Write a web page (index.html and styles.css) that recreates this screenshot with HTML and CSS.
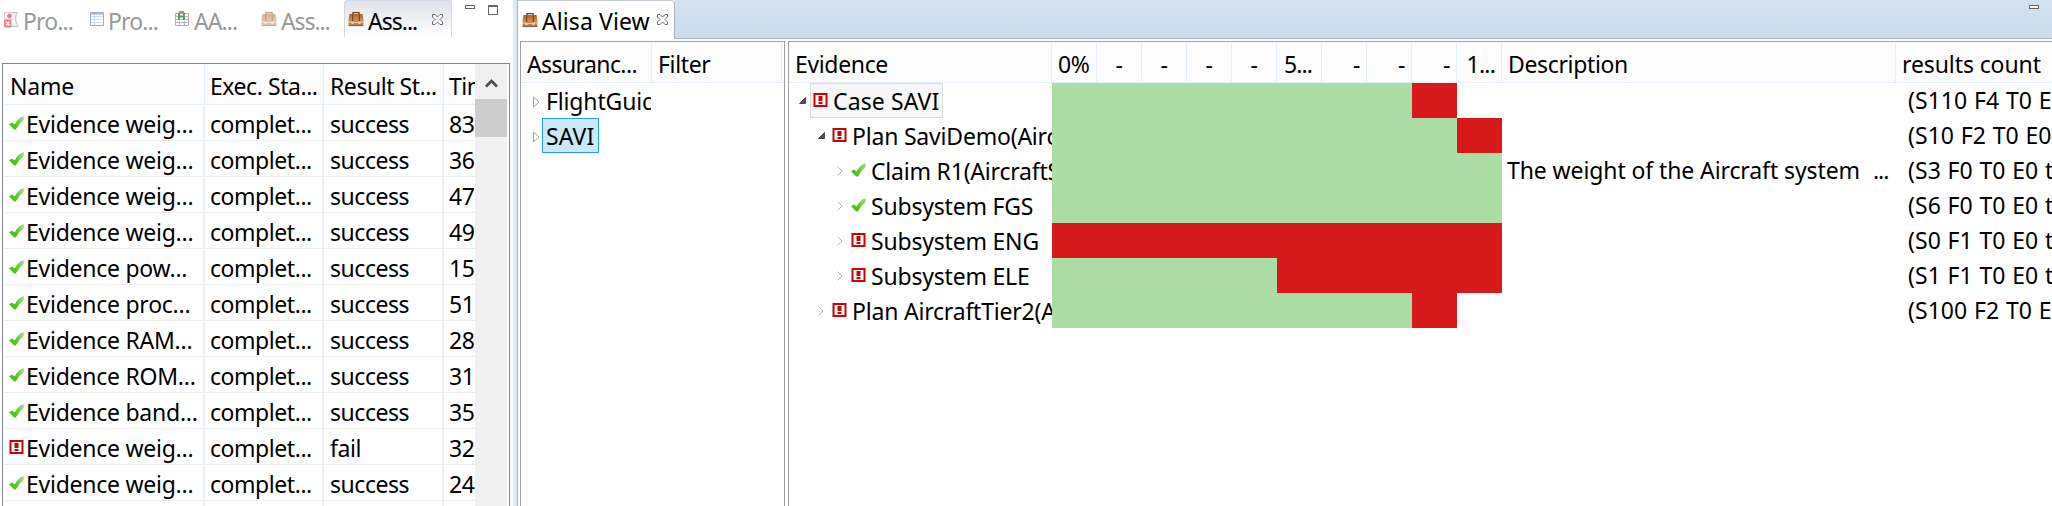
FILE: index.html
```html
<!DOCTYPE html>
<html lang="en">
<head>
<meta charset="utf-8">
<title>Alisa View</title>
<link rel="stylesheet" href="styles.css">
</head>
<body>
<svg class="defs" width="0" height="0">
  <defs>
    <linearGradient id="gCheck" x1="0" y1="1" x2="1" y2="0"><stop offset="0.35" stop-color="#4fc414"/><stop offset="1" stop-color="#b0de94"/></linearGradient>
    <linearGradient id="gCase" x1="0" y1="0" x2="0" y2="1"><stop offset="0" stop-color="#a8642f"/><stop offset="0.5" stop-color="#d08a4c"/><stop offset="1" stop-color="#b87a48"/></linearGradient>
  </defs>
  <symbol id="check" viewBox="0 0 15 14"><path d="M0 8.300 L3 6.400 L5.600 8.600 Q8.500 3 12 1 L15 0.200 L14.600 4 Q10.500 7 6.800 13.400 H5.200 Z" fill="url(#gCheck)"/></symbol>
  <symbol id="fail" viewBox="0 0 14 14"><path d="M1 1H13V13H1Z" fill="#fff" stroke="#c80404" stroke-width="2"/><path d="M5 3H9V8H5ZM5 9H9V11H5Z" fill="#c80404"/></symbol>
  <symbol id="case" viewBox="0 0 16 16"><path d="M5 4V1.600H11V4" fill="none" stroke="#70401c" stroke-width="1.400"/><path d="M1.500 3H14.500L15.400 8V14.600H0.600V8Z" fill="url(#gCase)"/><path d="M0.600 14.600H15.400" stroke="#7c5a3e" stroke-width="1"/><path d="M4.600 3.400V11M11.400 3.400V11" stroke="#7c451c" stroke-width="1.200"/><path d="M1 11H5M6 11.400H10M11 11H15" stroke="#e8d4bc" stroke-width="1"/><path d="M3.400 10.500H5.800V13H3.400ZM10.200 10.500H12.600V13H10.200Z" fill="#d9d3c8"/></symbol>
  <symbol id="close" viewBox="0 0 11 11"><path d="M0.500 0.500H3L5.500 3L8 0.500H10.500V3L8 5.500L10.500 8V10.500H8L5.500 8L3 10.500H0.500V8L3 5.500L0.500 3Z" fill="#fff" stroke="#6b6b6b"/></symbol>
  <symbol id="closed" viewBox="0 0 7 12"><path d="M0.500 1L6 6L0.500 11Z" fill="#fff" stroke="#a0a0a0"/></symbol>
  <symbol id="chev" viewBox="0 0 6 10"><path d="M0.600 0.600L5 5L0.600 9.400" fill="none" stroke="#b4b4b4"/></symbol>
  <symbol id="open" viewBox="0 0 7 7"><path d="M6.500 0.500V6.500H0.500Z" fill="#505050" stroke="#303030" stroke-width="0.800"/></symbol>
</svg>
<div class="app">
  <section class="left">
    <div class="tabs">
      <div class="tab t1"><svg width="15" height="17" viewBox="0 0 15 17"><path d="M0.500 1.500H9V8H0.500Z" fill="#fff" stroke="#dcc8d0"/><circle cx="5.500" cy="5" r="2.400" fill="#f08088"/><path d="M9 1.500H13.500L11.800 5V10L14 15.500H8" fill="#eef4fa" stroke="#b4c4d4"/><path d="M0 8.500H7.500V16.500H0Z" fill="#f08088"/><path d="M2 10.500L5.500 14.500M5.500 10.500L2 14.500" stroke="#fff" stroke-width="1.300"/></svg><span>Pro...</span></div>
      <div class="tab t2"><svg width="14" height="14" viewBox="0 0 14 14"><path d="M0.500 0.500H13.500V13.500H0.500Z" fill="#fafcff" stroke="#a4acc0"/><path d="M0.500 1.500H13.500" stroke="#a4b4d0" stroke-width="2"/><path d="M1 4.500H13M1 7.500H13M1 10.500H13M4.500 3V13" stroke="#d0dcec"/></svg><span>Pro...</span></div>
      <div class="tab t3"><svg width="14" height="16" viewBox="0 0 14 16"><path d="M0.500 2.500H13.500V14.500H0.500Z" fill="#fff" stroke="#a8b0b8"/><path d="M1 5.500H13M1 8.500H13M1 11.500H13M4.500 10V14M9.500 10V14" stroke="#b4bcc4"/><path d="M4 9V3L5 1H8L9 3V9M4 5.500H9" fill="none" stroke="#5f9c68" stroke-width="2"/><path d="M4.500 1.500H8.500" fill="none" stroke="#e07880" stroke-width="2"/></svg><span>AA...</span></div>
      <div class="tab t4"><svg class="dim" width="16" height="16"><use href="#case"/></svg><span>Ass...</span></div>
      <div class="tab active"><svg width="16" height="16"><use href="#case"/></svg><span>Ass...</span><svg class="x" width="11" height="11"><use href="#close"/></svg></div>
      <i class="min"></i><i class="max"></i>
    </div>
    <div class="results">
      <div class="grid">
        <div class="r head"><div>Name</div><div>Exec. Sta...</div><div>Result St...</div><div>Tim</div></div>
        <div class="r"><div><svg><use href="#check"/></svg><span>Evidence weig...</span></div><div>complet...</div><div>success</div><div>83</div></div>
        <div class="r"><div><svg><use href="#check"/></svg><span>Evidence weig...</span></div><div>complet...</div><div>success</div><div>36</div></div>
        <div class="r"><div><svg><use href="#check"/></svg><span>Evidence weig...</span></div><div>complet...</div><div>success</div><div>47</div></div>
        <div class="r"><div><svg><use href="#check"/></svg><span>Evidence weig...</span></div><div>complet...</div><div>success</div><div>49</div></div>
        <div class="r"><div><svg><use href="#check"/></svg><span>Evidence pow...</span></div><div>complet...</div><div>success</div><div>15</div></div>
        <div class="r"><div><svg><use href="#check"/></svg><span>Evidence proc...</span></div><div>complet...</div><div>success</div><div>51</div></div>
        <div class="r"><div><svg><use href="#check"/></svg><span>Evidence RAM...</span></div><div>complet...</div><div>success</div><div>28</div></div>
        <div class="r"><div><svg><use href="#check"/></svg><span>Evidence ROM...</span></div><div>complet...</div><div>success</div><div>31</div></div>
        <div class="r"><div><svg><use href="#check"/></svg><span>Evidence band...</span></div><div>complet...</div><div>success</div><div>35</div></div>
        <div class="r"><div><svg><use href="#fail"/></svg><span>Evidence weig...</span></div><div>complet...</div><div>fail</div><div>32</div></div>
        <div class="r"><div><svg><use href="#check"/></svg><span>Evidence weig...</span></div><div>complet...</div><div>success</div><div>24</div></div>
        <div class="r"><div></div><div></div><div></div><div></div></div>
      </div>
      <div class="scroll"><div class="up"><svg width="13" height="10" viewBox="0 0 13 10"><path d="M1 8.500L6.500 3L12 8.500" fill="none" stroke="#505050" stroke-width="2.800"/></svg></div><div class="thumb"></div></div>
    </div>
  </section>
  <div class="sash"></div>
  <section class="right">
    <div class="bar">
      <div class="vtab"><svg width="16" height="16"><use href="#case"/></svg><span>Alisa View</span><svg class="x" width="11" height="11"><use href="#close"/></svg></div>
      <div class="fill"><i class="min"></i></div>
    </div>
    <div class="views">
      <div class="pane cases">
        <div class="phead"><div class="c1">Assuranc...</div><div class="c2">Filter</div></div>
        <div class="crow"><svg width="7" height="12"><use href="#closed"/></svg><span>FlightGuidance</span></div>
        <div class="crow"><svg width="7" height="12"><use href="#closed"/></svg><span class="sel">SAVI</span></div>
      </div>
      <div class="pane evidence">
        <div class="phead"><div class="ev">Evidence</div><div class="p">0%</div><div class="p mid">-</div><div class="p mid">-</div><div class="p mid">-</div><div class="p mid">-</div><div class="p five">5...</div><div class="p end">-</div><div class="p end">-</div><div class="p end">-</div><div class="p end one">1...</div><div class="desc">Description</div><div class="cnt">results count</div></div>
        <div class="erow"><div class="name"><svg class="o" width="7" height="7"><use href="#open"/></svg><span class="item focus"><svg class="ic"><use href="#fail"/></svg>Case SAVI</span></div><div class="g s8"></div><div class="b s1"></div><div class="w s1"></div><div class="desc"></div><div class="cnt">(S110 F4 T0 E0</div></div>
        <div class="erow l1"><div class="name"><svg class="o" width="7" height="7"><use href="#open"/></svg><span class="item"><svg class="ic"><use href="#fail"/></svg>Plan SaviDemo(Aircraft</span></div><div class="g s9"></div><div class="b s1"></div><div class="desc"></div><div class="cnt">(S10 F2 T0 E0 t</div></div>
        <div class="erow l2"><div class="name"><svg class="c" width="6" height="10"><use href="#chev"/></svg><span class="item"><svg class="ic"><use href="#check"/></svg>Claim R1(AircraftSys</span></div><div class="g s10"></div><div class="desc"><span>The weight of the Aircraft system</span><span>...</span></div><div class="cnt">(S3 F0 T0 E0 t0</div></div>
        <div class="erow l2"><div class="name"><svg class="c" width="6" height="10"><use href="#chev"/></svg><span class="item"><svg class="ic"><use href="#check"/></svg>Subsystem FGS</span></div><div class="g s10"></div><div class="desc"></div><div class="cnt">(S6 F0 T0 E0 t0</div></div>
        <div class="erow l2"><div class="name"><svg class="c" width="6" height="10"><use href="#chev"/></svg><span class="item"><svg class="ic"><use href="#fail"/></svg>Subsystem ENG</span></div><div class="b s10"></div><div class="desc"></div><div class="cnt">(S0 F1 T0 E0 t0</div></div>
        <div class="erow l2"><div class="name"><svg class="c" width="6" height="10"><use href="#chev"/></svg><span class="item"><svg class="ic"><use href="#fail"/></svg>Subsystem ELE</span></div><div class="g s5"></div><div class="b s5"></div><div class="desc"></div><div class="cnt">(S1 F1 T0 E0 t0</div></div>
        <div class="erow l1"><div class="name"><svg class="c" width="6" height="10"><use href="#chev"/></svg><span class="item"><svg class="ic"><use href="#fail"/></svg>Plan AircraftTier2(Air</span></div><div class="g s8"></div><div class="b s1"></div><div class="w s1"></div><div class="desc"></div><div class="cnt">(S100 F2 T0 E0</div></div>
      </div>
    </div>
  </section>
</div>
</body>
</html>
```
FILE: styles.css
```css
* { box-sizing: border-box; }
body { margin: 0; background: #fff; color: #000; font: 23px/34px "Noto Sans", "Open Sans", sans-serif; letter-spacing: -0.35px; overflow: hidden; }
.defs { position: absolute; }
svg { display: block; flex: none; }
span { white-space: pre; }
.app { display: flex; width: 2052px; height: 506px; overflow: hidden; }

/* results panel */
.left { width: 513px; flex: none; display: flex; flex-direction: column; }
.tabs { display: flex; height: 63px; flex: none; align-items: flex-start; }
.tab { display: flex; height: 37px; color: #999; letter-spacing: -0.9px; }
.tab span { padding-top: 4px; }
.tab svg { margin-top: 11px; }
.t1 { width: 86px; padding-left: 4px; gap: 4px; }
.t2 { width: 85px; padding-left: 4px; gap: 4px; }
.t2 svg { margin-top: 12px; }
.t3 { width: 86px; padding-left: 4px; gap: 5px; }
.t4 { width: 87px; padding-left: 4px; gap: 4px; }
.tab.t4 span { letter-spacing: -1.1px; }
.dim { opacity: .5; }
.tab.active { width: 108px; padding-left: 3px; gap: 4px; color: #000; border: solid #d4d8e4; border-width: 1px 1px 0; border-radius: 3px 3px 0 0; background: linear-gradient(#e0e2ea, #fff); }
.tab.active span { padding-top: 3px; width: 50px; letter-spacing: -1px; }
.tab.active svg { margin-top: 10px; }
.tab.active .x { margin: 13px 0 0 10px; }
.min { width: 10px; height: 4px; border: 1px solid #666; background: #fff; margin: 5px 0 0 13px; }
.max { width: 10px; height: 10px; border: 1px solid #666; border-top-width: 2px; margin: 5px 0 0 13px; }
.results { width: 508px; margin-left: 2px; height: 443px; border: solid #828790; border-width: 1px 1px 0; display: flex; overflow: hidden; }
.grid { width: 472px; padding-left: 1px; overflow: hidden; }
.r { display: grid; grid-template-columns: 201px 119px 120px 31px; height: 36px; border-bottom: 1px solid #ececec; line-height: 38px; letter-spacing: -0.45px; }
.r > div { display: flex; height: 35px; border-right: 2px solid #eaeff8; padding-left: 5px; overflow: hidden; white-space: nowrap; }
.r > div:nth-child(3) { padding-left: 6px; }
.r > div:first-child { padding-left: 5px; gap: 2px; letter-spacing: -0.25px; }
.r > div:last-child { border: 0; }
.r svg { width: 15px; height: 14px; margin-top: 11px; }
.r.head { height: 41px; line-height: 42px; background: #fcfcfc; border-color: #e5effb; letter-spacing: -0.45px; }
.r.head > div { height: 40px; border-right: 1px solid #e5effb; padding-top: 1px; }
.r.head > div:first-child { padding-left: 6px; }
.r.head > div:last-child { border: 0; }
.scroll { width: 32px; background: #f0f0f0; }
.up { height: 35px; padding: 14px 0 0 10px; }
.thumb { height: 38px; background: #cdcdcd; }

/* divider */
.sash { width: 5px; background: #e1e6f6; border-right: 1px solid #a9b1c6; flex: none; }

/* editor area */
.right { flex: 1; min-width: 0; }
.bar { display: flex; height: 39px; }
.vtab { display: flex; width: 157px; padding: 0 0 0 4px; gap: 4px; border-top: 1px solid #c4cad8; border-right: 1px solid #a9b1c6; border-top-right-radius: 4px; }
.vtab svg { margin-top: 11px; }
.vtab span { padding-top: 3px; width: 107px; letter-spacing: 0.1px; }
.vtab .x { margin: 13px 0 0 4px; }
.fill { flex: 1; background: linear-gradient(#d3e1f0, #ccdcec); border-bottom: 1px solid #a9b4c8; display: flex; justify-content: flex-end; }
.fill .min { margin-right: 13px; }
.views { display: flex; gap: 3px; padding: 2px 0 0 2px; height: 467px; }
.pane { border: 1px solid #a0a0a0; border-bottom: 0; overflow: hidden; }
.cases { width: 265px; flex: none; }
.evidence { flex: 1; border-right: 0; min-width: 0; letter-spacing: -0.2px; }
.phead { display: flex; height: 41px; line-height: 43px; padding-top: 1px; background: #fcfcfc; border-bottom: 1px solid #e5effb; letter-spacing: -0.35px; }
.phead > div { height: 39px; border-right: 1px solid #e5effb; flex: none; white-space: nowrap; }
.c1 { width: 131px; padding-left: 6px; letter-spacing: -0.6px; }
.c2 { width: 130px; padding-left: 6px; }
.crow { height: 35px; width: 130px; display: flex; padding-left: 12px; gap: 2px; overflow: hidden; line-height: 35px; }
.crow svg { margin-top: 13px; }
.crow span { border: 1px solid transparent; height: 35px; padding: 0 4px 0 3px; letter-spacing: -0.15px; }
.crow .sel { background: #cbe8f6; border-color: #26a0da; width: 57px; letter-spacing: 0.1px; }
.ev { width: 263px; padding-left: 6px; }
.p { width: 45px; padding-left: 6px; }
.mid { padding: 0; text-align: center; }
.five { padding-left: 7px; letter-spacing: -0.9px; }
.end { padding: 0 6px 0 0; text-align: right; }
.one { letter-spacing: -0.8px; }
.erow { display: flex; height: 35px; line-height: 35px; }
.name { width: 263px; flex: none; display: flex; overflow: hidden; padding-left: 10px; }
.l1 .name { padding-left: 29px; }
.l2 .name { padding-left: 48px; }
.name .o { margin: 14px 4px 0 0; }
.name .c { margin: 13px 5px 0 0; }
.item { display: flex; height: 35px; gap: 5px; border: 1px solid transparent; padding-left: 2px; flex: none; }
.item.focus { background: #f7f7f7; border-color: #dedede; width: 133px; letter-spacing: 0.1px; }
.ic { width: 15px; height: 14px; margin-top: 9px; }
.g { background: #abdda4; }
.b { background: #d7191c; }
.s1 { width: 45px; }
.s5 { width: 225px; }
.s8 { width: 360px; }
.s9 { width: 405px; }
.s10 { width: 450px; }
.g, .b, .w { flex: none; }
.desc { width: 394px; flex: none; padding-left: 6px; }
.erow .desc { display: flex; gap: 13px; padding-left: 5px; letter-spacing: -0.1px; }
.erow .desc span:last-child { letter-spacing: -1px; }
.cnt { width: 157px; flex: none; padding-left: 6px; white-space: nowrap; overflow: hidden; }
.phead .cnt { letter-spacing: -0.1px; }
.erow .cnt { padding-left: 12px; letter-spacing: 0.05px; word-spacing: 0.7px; }
```
